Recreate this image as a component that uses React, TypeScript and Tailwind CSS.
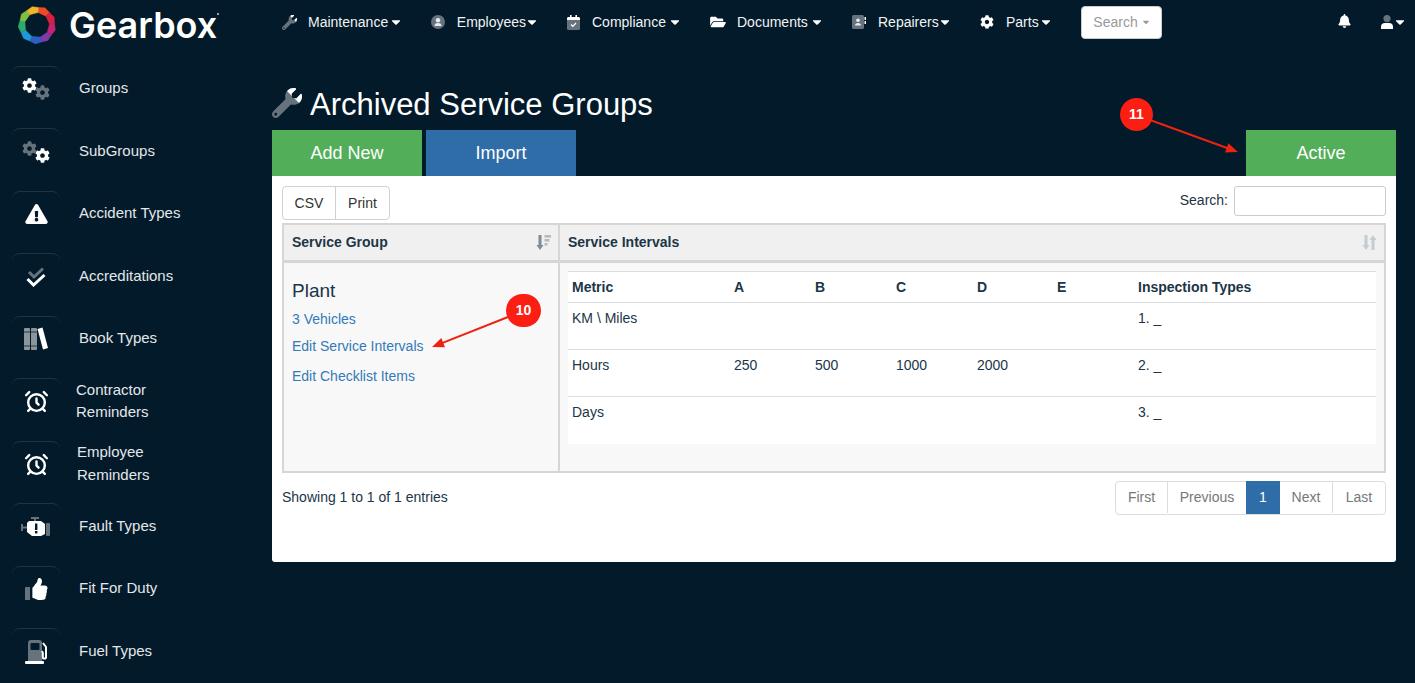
import type { ComponentType, ReactNode } from 'react';
import { FaBell, FaCaretDown, FaCog, FaExclamationTriangle, FaThumbsUp, FaWrench, FaFolderOpen } from 'react-icons/fa';
import { LuAlarmClock } from 'react-icons/lu';

const GRAY = 'text-[#66737c]';

function Duo({ icon: Icon, className, clip }: { icon: ComponentType<{ className?: string }>; className: string; clip: string }) {
  return (
    <span className={`relative inline-block ${className}`}>
      <Icon className={`w-full h-full ${GRAY}`} />
      <Icon className={`absolute inset-0 w-full h-full text-white ${clip}`} />
    </span>
  );
}

function GearsIcon({ flip }: { flip?: boolean }) {
  return (
    <span className="relative block w-[28px] h-[22px]">
      <FaCog className={`absolute left-0 top-0 w-[15px] h-[15px] ${flip ? GRAY : 'text-white'}`} />
      <FaCog className={`absolute right-0 bottom-0 w-[15px] h-[15px] ${flip ? 'text-white' : GRAY}`} />
    </span>
  );
}

function ChecksIcon() {
  return (
    <svg width="20" height="20" viewBox="0 0 20 20" fill="none" strokeWidth="3">
      <polyline points="3,5 8,10 17,1.5" stroke="#66737c" />
      <polyline points="1.5,12 7.5,18 18.5,8" stroke="#fff" />
    </svg>
  );
}

function BooksIcon() {
  return (
    <svg width="24" height="24" viewBox="0 0 24 24">
      <rect x="0" y="1" width="6" height="22" rx="1" fill="#8a959c" />
      <rect x="7" y="1" width="6" height="22" rx="1" fill="#8a959c" />
      <rect x="0" y="4" width="6" height="2" fill="#5a6770" />
      <rect x="7" y="4" width="6" height="2" fill="#5a6770" />
      <rect x="0" y="18" width="6" height="2" fill="#5a6770" />
      <rect x="7" y="18" width="6" height="2" fill="#5a6770" />
      <path d="M13.5 2 L18.5 0.5 L24 21 L19 22.5 Z" fill="#fff" />
    </svg>
  );
}

function EngineIcon() {
  return (
    <svg width="30" height="20" viewBox="0 0 30 20">
      <rect x="10" y="0" width="8" height="2" fill="#66737c" />
      <rect x="13" y="1" width="2" height="3" fill="#66737c" />
      <rect x="0" y="7" width="2" height="7" fill="#66737c" />
      <rect x="2" y="9.5" width="4" height="2" fill="#66737c" />
      <rect x="25" y="6" width="4" height="13" rx="1" fill="#66737c" />
      <path d="M8 4 H20 L24 7 V17 L20 19 H11 L6 15 V6 Z" fill="#fff" />
      <rect x="14" y="6.5" width="2.4" height="6.5" fill="#021a29" />
      <rect x="14" y="14" width="2.4" height="2.4" fill="#021a29" />
    </svg>
  );
}

function ThumbIcon() {
  return (
    <span className="relative block w-[23px] h-[22px]">
      <FaThumbsUp className="w-full h-full text-white" />
      <span className="absolute left-0 bottom-0 w-[7px] h-[13px] rounded-[1px] bg-[#66737c] border-r-2 border-[#021a29]" />
    </span>
  );
}

function FuelIcon() {
  return (
    <svg width="23" height="24" viewBox="0 0 23 24">
      <path d="M3 3 a3 3 0 0 1 3-3 h8 a3 3 0 0 1 3 3 v18 h-14 Z" fill="#66737c" />
      <rect x="5.5" y="3" width="9" height="7" rx="1" fill="#021a29" />
      <rect x="0" y="21" width="19" height="3" rx="1" fill="#fff" />
      <path d="M18 3 L21 7 V17 a1.6 1.6 0 0 1 -3.2 0 V13 L17 11" fill="none" stroke="#fff" strokeWidth="2" />
    </svg>
  );
}

function AlarmIcon() {
  return <LuAlarmClock className="w-[25px] h-[25px] text-white" strokeWidth={2.3} />;
}

function UserCircleIcon() {
  return (
    <svg width="14" height="14" viewBox="0 0 14 14">
      <circle cx="7" cy="7" r="7" fill="#66737c" />
      <circle cx="7" cy="5.2" r="2.2" fill="#e8eaec" />
      <path d="M3.5 11 a3.5 3 0 0 1 7 0 Z" fill="#e8eaec" />
    </svg>
  );
}

function CalendarIcon() {
  return (
    <svg width="13" height="15" viewBox="0 0 13 15">
      <rect x="0" y="2" width="13" height="13" rx="1.5" fill="#66737c" />
      <path d="M0 5 V3.5 A1.5 1.5 0 0 1 1.5 2 H11.5 A1.5 1.5 0 0 1 13 3.5 V5 Z" fill="#fff" />
      <rect x="3" y="0" width="1.6" height="3" fill="#fff" />
      <rect x="8.4" y="0" width="1.6" height="3" fill="#fff" />
      <polyline points="4,9.5 5.8,11.3 9,8" fill="none" stroke="#fff" strokeWidth="1.2" />
    </svg>
  );
}

function ContactBookIcon() {
  return (
    <svg width="14" height="14" viewBox="0 0 14 14">
      <rect x="0" y="0" width="12" height="14" rx="1.5" fill="#66737c" />
      <circle cx="6" cy="5.2" r="1.8" fill="#e8eaec" />
      <path d="M3 10.5 a3 2.6 0 0 1 6 0 Z" fill="#e8eaec" />
      <rect x="12.5" y="2" width="1.5" height="3" fill="#fff" />
      <rect x="12.5" y="6" width="1.5" height="3" fill="#fff" />
    </svg>
  );
}

function UserIcon() {
  return (
    <svg width="14" height="14" viewBox="0 0 14 14">
      <circle cx="7" cy="3.6" r="3.6" fill="#66737c" />
      <path d="M1 14 V12 a4 4 0 0 1 4-4 h4 a4 4 0 0 1 4 4 v2 Z" fill="#fff" />
    </svg>
  );
}

function SortDownIcon() {
  return (
    <svg width="15" height="15" viewBox="0 0 15 15">
      <path d="M2.5 0 h3 v10 h2 l-3.5 5 l-3.5 -5 h2 Z" fill="#7d8c96" />
      <rect x="8.5" y="0" width="6.5" height="2.6" fill="#b3bcc2" />
      <rect x="8.5" y="4" width="5" height="2.6" fill="#b3bcc2" />
      <rect x="8.5" y="8" width="3" height="2.6" fill="#b3bcc2" />
    </svg>
  );
}

function SortBothIcon() {
  return (
    <svg width="15" height="15" viewBox="0 0 15 15" fill="#c5ccd0">
      <path d="M2.5 0 h3 v10 h2 l-3.5 5 l-3.5 -5 h2 Z" />
      <path d="M9.5 15 h3 v-10 h2 l-3.5 -5 l-3.5 5 h2 Z" />
    </svg>
  );
}

const sideItems: { label: ReactNode; icon: ReactNode; textClass: string }[] = [
  { label: 'Groups', icon: <GearsIcon />, textClass: 'ml-[19px]' },
  { label: 'SubGroups', icon: <GearsIcon flip />, textClass: 'ml-[19px]' },
  { label: 'Accident Types', icon: <FaExclamationTriangle className="w-[23px] h-[20px] text-white" />, textClass: 'ml-[19px]' },
  { label: 'Accreditations', icon: <ChecksIcon />, textClass: 'ml-[19px]' },
  { label: 'Book Types', icon: <BooksIcon />, textClass: 'ml-[19px]' },
  { label: <>Contractor<br />Reminders</>, icon: <AlarmIcon />, textClass: 'ml-[16px]' },
  { label: <>Employee<br />Reminders</>, icon: <AlarmIcon />, textClass: 'ml-[17px]' },
  { label: 'Fault Types', icon: <EngineIcon />, textClass: 'ml-[19px]' },
  { label: 'Fit For Duty', icon: <ThumbIcon />, textClass: 'ml-[19px]' },
  { label: 'Fuel Types', icon: <FuelIcon />, textClass: 'ml-[19px]' },
];

const navItems = [
  { label: 'Maintenance', width: 'w-[119px]', slot: 'w-[26px]', icon: <Duo icon={FaWrench} className="w-[15px] h-[15px]" clip="[clip-path:polygon(45%_0,100%_0,100%_55%)]" /> },
  { label: 'Employees', width: 'w-[106px]', slot: 'w-[26px]', icon: <UserCircleIcon /> },
  { label: 'Compliance', width: 'w-[113px]', slot: 'w-[25px]', icon: <CalendarIcon /> },
  { label: 'Documents', width: 'w-[112px]', slot: 'w-[27px]', icon: <FaFolderOpen className="w-[16px] h-[14px] text-white" /> },
  { label: 'Repairers', width: 'w-[98px]', slot: 'w-[26px]', icon: <ContactBookIcon /> },
  { label: 'Parts', width: 'w-[71px]', slot: 'w-[26px]', icon: <FaCog className="w-[14px] h-[14px] text-white" /> },
];

function GearboxLogo() {
  const colors = ['#ef4a23', '#d81f3f', '#c2246f', '#7f3aa8', '#2f5fc4', '#1e9ad6', '#2fa86e', '#7fbf3f', '#f2b52a'];
  const pt = (r: number, deg: number) => `${r * Math.cos((deg * Math.PI) / 180)} ${r * Math.sin((deg * Math.PI) / 180)}`;
  return (
    <svg width="38" height="38" viewBox="-19 -19 38 38" className="shrink-0">
      {colors.map((c, i) => {
        const a0 = i * 40 - 85;
        const a1 = a0 + 40;
        return (
          <path
            key={c}
            d={`M${pt(17.6, a0)} L${pt(19, a0 + 20)} L${pt(17.6, a1)} L${pt(12.5, a1)} L${pt(12.5, a0)} Z`}
            fill={c}
            stroke={c}
            strokeWidth="0.4"
          />
        );
      })}
    </svg>
  );
}

function Arrow({ x1, y1, x2, y2, className }: { x1: number; y1: number; x2: number; y2: number; className: string }) {
  const a = Math.atan2(y2 - y1, x2 - x1);
  const p = (len: number, off: number) =>
    `${x2 - len * Math.cos(a) - off * Math.sin(a)},${y2 - len * Math.sin(a) + off * Math.cos(a)}`;
  return (
    <svg className={className} width="1415" height="683">
      <line x1={x1} y1={y1} x2={x2 - 8 * Math.cos(a)} y2={y2 - 8 * Math.sin(a)} stroke="#ee2211" strokeWidth="2" />
      <polygon points={`${x2},${y2} ${p(12, 5)} ${p(12, -5)}`} fill="#ee2211" />
    </svg>
  );
}

function Badge({ children, className }: { children: ReactNode; className: string }) {
  return (
    <div className={`absolute rounded-full bg-[#fb1e13] text-white font-bold text-[14px] flex items-center justify-center ${className}`}>
      {children}
    </div>
  );
}

const rows = [
  { metric: 'KM \\ Miles', a: '', b: '', c: '', d: '', type: '1. _' },
  { metric: 'Hours', a: '250', b: '500', c: '1000', d: '2000', type: '2. _' },
  { metric: 'Days', a: '', b: '', c: '', d: '', type: '3. _' },
];

export default function App() {
  return (
    <div className="relative h-[683px] overflow-hidden bg-[#021a29] text-[14px] font-['Liberation_Sans',Arial,sans-serif]">
      {/* top bar */}
      <header className="h-[44px] flex items-center text-white">
        <div className="w-[282px] pl-[18px] pt-[6px] flex items-center">
          <GearboxLogo />
          <span className="ml-[13px] text-[36px] leading-none font-semibold font-['Inter',sans-serif]">Gearbox</span>
          <span className="self-start mt-[7px] w-[2px] h-[2px] bg-[#9aa5ac]" />
        </div>
        <nav className="flex items-center gap-[30px]">
          {navItems.map((item) => (
            <a key={item.label} className={`flex items-center ${item.width}`}>
              <span className={`flex items-center ${item.slot}`}>{item.icon}</span>
              <span className="text-[#f1f3f4]">{item.label}</span>
              <FaCaretDown className="ml-auto -mr-px w-[12px] h-[14px] text-white" />
            </a>
          ))}
          <button className="w-[81px] h-[33px] bg-white border border-[#cccccc] rounded-[4px] text-[#999999] flex items-center justify-center">
            Search
            <FaCaretDown className="ml-[4px] w-[8px] h-[10px] text-[#999999]" />
          </button>
        </nav>
        <div className="ml-auto flex items-center">
          <FaBell className="w-[13px] h-[14px] -mt-[2px] text-white" />
          <span className="ml-[29px] mr-[9px] flex items-center">
            <UserIcon />
            <FaCaretDown className="w-[12px] h-[14px] text-white" />
          </span>
        </div>
      </header>

      <div className="flex">
        {/* side menu */}
        <aside className="w-[272px] shrink-0 pt-[21.5px] pl-[12px]">
          {sideItems.map((item, i) => (
            <div key={i} className="flex items-center h-[46px] mb-[16.5px]">
              <div className="w-[48px] h-[46px] rounded-[8px] border-t border-[#1e3444] flex items-center justify-center">
                {item.icon}
              </div>
              <span className={`text-[15px] leading-[22.5px] text-[#e4e7e9] ${item.textClass}`}>{item.label}</span>
            </div>
          ))}
        </aside>

        {/* main */}
        <main className="w-[1124px]">
          <h1 className="h-[86px] pt-[35px] flex items-center text-white text-[31px] leading-none">
            <Duo icon={FaWrench} className="w-[30px] h-[30px] mr-[8px] -mt-[3px]" clip="[clip-path:polygon(40%_0,100%_0,100%_60%)]" />
            Archived Service Groups
          </h1>
          <div className="flex gap-[4px] text-[18px] text-white">
            <button className="w-[150px] h-[46px] bg-[#53ae5a]">Add New</button>
            <button className="w-[150px] h-[46px] bg-[#2e6da8]">Import</button>
            <button className="ml-auto w-[150px] h-[46px] bg-[#53ae5a]">Active</button>
          </div>

          <section className="h-[386px] bg-white rounded-b-[3px] px-[10px] pt-[10px] text-[#1c3547]">
            <div className="flex justify-between">
              <div className="flex h-[34px] border border-[#d0d0d0] rounded-[4px] text-[#333333]">
                <span className="w-[53px] flex items-center justify-center border-r border-[#d0d0d0]">CSV</span>
                <span className="w-[53px] flex items-center justify-center">Print</span>
              </div>
              <label className="flex items-start">
                <span className="mr-[6px] mt-[4px]">Search:</span>
                <input className="w-[152px] h-[30px] border border-[#cccccc] rounded-[3px]" />
              </label>
            </div>

            <div className="mt-[3px] h-[250px] border-2 border-[#d6d6d6] grid grid-cols-[274px_2px_1fr] grid-rows-[35px_3px_1fr] bg-[#f8f8f8]">
              <div className="bg-[#f0f0f0] flex items-center justify-between pl-[8px] pr-[7px] font-bold">
                Service Group
                <SortDownIcon />
              </div>
              <div className="bg-[#d6d6d6]" />
              <div className="bg-[#f0f0f0] flex items-center justify-between pl-[8px] pr-[7px] font-bold">
                Service Intervals
                <SortBothIcon />
              </div>
              <div className="col-span-3 bg-[#d6d6d6]" />
              <div className="pl-[8px] pt-[18px]">
                <div className="text-[19px] leading-[20px]">Plant</div>
                <a className="block mt-[8px] text-[#337ab7] leading-[20px]">3 Vehicles</a>
                <a className="block mt-[7px] text-[#337ab7] leading-[20px]">Edit Service Intervals</a>
                <a className="block mt-[10px] text-[#337ab7] leading-[20px]">Edit Checklist Items</a>
              </div>
              <div className="bg-[#d6d6d6]" />
              <div className="px-[8px] pt-[8px]">
                <table className="w-full table-fixed bg-white border-collapse">
                  <thead>
                    <tr className="h-[31px] border-t border-[#dddddd] border-b text-left">
                      <th className="w-[166px] pl-[4px] font-bold">Metric</th>
                      <th className="w-[81px] font-bold">A</th>
                      <th className="w-[81px] font-bold">B</th>
                      <th className="w-[81px] font-bold">C</th>
                      <th className="w-[80px] font-bold">D</th>
                      <th className="w-[81px] font-bold">E</th>
                      <th className="font-bold">Inspection Types</th>
                    </tr>
                  </thead>
                  <tbody>
                    {rows.map((r) => (
                      <tr key={r.metric} className="h-[47px] border-b border-[#dddddd] last:border-b-0 align-top">
                        <td className="pl-[4px] pt-[5px]">{r.metric}</td>
                        <td className="pt-[5px]">{r.a}</td>
                        <td className="pt-[5px]">{r.b}</td>
                        <td className="pt-[5px]">{r.c}</td>
                        <td className="pt-[5px]">{r.d}</td>
                        <td className="pt-[5px]" />
                        <td className="pt-[5px]">{r.type}</td>
                      </tr>
                    ))}
                  </tbody>
                </table>
              </div>
            </div>

            <div className="mt-[8px] flex items-start justify-between">
              <span className="mt-[6px]">Showing 1 to 1 of 1 entries</span>
              <div className="flex h-[34px] pb-px border border-[#dddddd] rounded-[4px] text-[#777777]">
                <span className="w-[52px] flex items-center justify-center border-r border-[#dddddd]">First</span>
                <span className="w-[78px] flex items-center justify-center">Previous</span>
                <span className="w-[34px] -my-px flex items-center justify-center bg-[#2e6da8] text-white">1</span>
                <span className="w-[53px] flex items-center justify-center border-r border-[#dddddd]">Next</span>
                <span className="w-[52px] flex items-center justify-center">Last</span>
              </div>
            </div>
          </section>
        </main>
      </div>

      {/* annotations */}
      <Arrow x1={1150} y1={120} x2={1238} y2={152} className="absolute inset-0 pointer-events-none" />
      <Arrow x1={508} y1={317} x2={432} y2={347} className="absolute inset-0 pointer-events-none" />
      <Badge className="left-[1120px] top-[98px] w-[33px] h-[33px]">11</Badge>
      <Badge className="left-[506px] top-[294px] w-[35px] h-[33px]">10</Badge>
    </div>
  );
}
